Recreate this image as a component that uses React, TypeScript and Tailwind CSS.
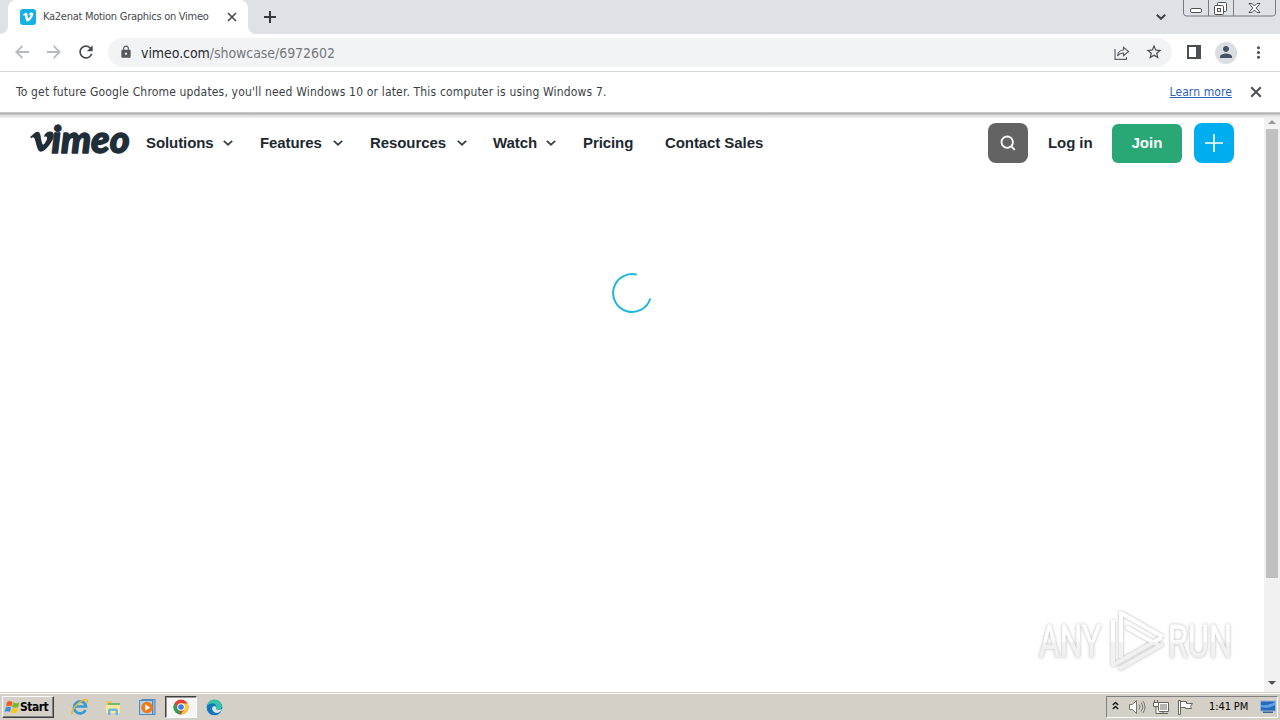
import React from "react";
import { FaVimeoV } from "react-icons/fa";
import { MdLock, MdRefresh, MdPerson, MdStarBorder, MdMoreVert } from "react-icons/md";

function Chevron({ className }: { className: string }) {
  return (
    <svg className={className} width="10" height="6" viewBox="0 0 10 6" fill="none" stroke="#39434a" strokeWidth="1.8">
      <path d="M.8.8 5 4.7 9.2.8" />
    </svg>
  );
}

function Cross({ size, color }: { size: number; color: string }) {
  return (
    <svg width={size} height={size} viewBox="0 0 10 10" stroke={color} strokeWidth="1.6">
      <path d="M1 1l8 8M9 1 1 9" />
    </svg>
  );
}

function TabStrip() {
  return (
    <header className="flex h-[34px] bg-[#dee1e6]">
      <svg className="mt-[26px] shrink-0" width="8" height="8"><path d="M8 0v8H0a8 8 0 0 0 8-8" fill="#fff" /></svg>
      <div className="flex h-[34px] w-[240px] items-center rounded-t-lg bg-white pl-3">
        <div className="flex size-4 items-center justify-center rounded-[3px] bg-[#14b1e7] text-white"><FaVimeoV size={12} /></div>
        <span className="ml-[7px] w-[184px] whitespace-nowrap pt-px font-['DejaVu_Sans_Condensed','DejaVu_Sans',sans-serif] text-[11px] tracking-[-0.27px] text-[#45494e] [font-stretch:condensed]">Ka2enat Motion Graphics on Vimeo</span>
        <Cross size={10} color="#45494e" />
      </div>
      <svg className="mt-[26px] shrink-0" width="8" height="8"><path d="M0 0v8h8a8 8 0 0 1-8-8" fill="#fff" /></svg>
      <svg className="ml-2 mt-[11px]" width="12" height="12" stroke="#34373c" strokeWidth="2"><path d="M6 0v12M0 6h12" /></svg>
      <svg className="ml-auto mt-[14px]" width="10" height="6" fill="none" stroke="#3c4043" strokeWidth="2"><path d="M.8.8 5 4.8 9.2.8" /></svg>
      <svg className="ml-[17px]" width="97" height="17" fill="none" stroke="#777a80">
        <path d="M.5 0v13q0 3 3 3h86q3 0 3-3V0M25.500 0v16M50.500 0v16" />
        <g stroke="#4e5258">
          <rect x="7.500" y="8.500" width="11" height="4" rx="1.500" fill="#fff" />
          <path d="M34.500 5V3.500q0-1 1-1h7q1 0 1 1v7q0 1-1 1H41" fill="#fff" />
          <rect x="31.500" y="5.500" width="9" height="9" rx="1" fill="#fff" />
          <rect x="34.500" y="8.500" width="3" height="3" />
          <path d="M66 3.500h3l2.500 2.500L74 3.500h3L73.200 8l3.800 4.500h-3L71.500 10 69 12.500h-3L69.800 8z" fill="#fff" />
        </g>
      </svg>
    </header>
  );
}

function Toolbar() {
  return (
    <div className="flex h-[38px] shrink-0 items-center border-b border-[#d4d6d9] bg-white">
      <svg className="mb-px ml-[15px]" width="14" height="14" fill="none" stroke="#b8babd" strokeWidth="1.8"><path d="M14 7H1.500M7.500.8 1.300 7l6.200 6.200" /></svg>
      <svg className="mb-px ml-[18px]" width="14" height="14" fill="none" stroke="#b8babd" strokeWidth="1.8"><path d="M0 7h12.500M6.500.8 12.700 7l-6.200 6.200" /></svg>
      <MdRefresh className="mb-px ml-[15px]" size={20} color="#484b4f" />
      <div className="ml-3 flex h-[29px] w-[1064px] items-center rounded-full bg-[#f1f3f4] pl-[11px]">
        <MdLock className="mb-px" size={14} color="#55585d" />
        <span className="ml-[8px] whitespace-nowrap pt-px font-['DejaVu_Sans_Condensed','DejaVu_Sans',sans-serif] text-[14px] tracking-[-0.06px] text-[#74787d] [font-stretch:condensed]"><span className="text-[#292c30]">vimeo.com</span>/showcase/6972602</span>
        <svg className="ml-auto mr-[15px]" width="16" height="16" fill="none" stroke="#5f6368" strokeWidth="1.200">
          <path d="M1 4v10.400h11.500V12M3.500 11q.8-6 6-6V2.300L14.500 6.500l-5 4.200V8q-4 0-6 3z" />
        </svg>
        <MdStarBorder className="mb-px mr-[9px]" size={18} color="#484c51" />
      </div>
      <svg className="mb-px ml-[15px]" width="14" height="14"><path fill="#4b4e53" fillRule="evenodd" d="M0 0h14v14H0zM2 2v10h7V2z" /></svg>
      <div className="ml-[14px] flex size-[22px] items-center justify-center rounded-full bg-[#dadde2]"><MdPerson className="mb-px" size={18} color="#445064" /></div>
      <MdMoreVert className="ml-3" size={19} color="#4f5358" />
    </div>
  );
}

function UpdateBar() {
  return (
    <div className="flex h-10 shrink-0 items-center bg-white pl-4 font-['DejaVu_Sans_Condensed','DejaVu_Sans',sans-serif] text-[12px] text-[#3b3f44] [font-stretch:condensed]">
      <span className="whitespace-nowrap tracking-[0.165px]">To get future Google Chrome updates, you'll need Windows 10 or later. This computer is using Windows 7.</span>
      <span className="ml-auto mr-[18px] whitespace-nowrap tracking-[0.1px] text-[#2c62ba] underline">Learn more</span>
      <div className="mr-[18px]"><Cross size={12} color="#4a4d52" /></div>
    </div>
  );
}

function VimeoPage() {
  return (
    <main className="flex min-h-0 grow flex-col bg-white">
      <nav className="flex h-[50px] items-center font-['Liberation_Sans',sans-serif] text-[15px] font-bold tracking-[-0.08px] text-[#1d292f]">
        <svg className="ml-[29px] w-[103px] shrink-0 overflow-visible" height="40">
          <FaVimeoV x="-0.5" y="5" size={27} color="#1f2e38" />
          <text x="22.500" y="29.500" textLength="78" lengthAdjust="spacingAndGlyphs" fontFamily="Lato" fontStyle="italic" fontWeight="900" fontSize="38" fill="#1f2e38" stroke="#1f2e38" strokeWidth="1.400" strokeLinejoin="round">imeo</text>
        </svg>
        <span className="ml-[14px] w-[77px] whitespace-nowrap">Solutions</span><Chevron className="mr-[27px]" />
        <span className="w-[73px] whitespace-nowrap">Features</span><Chevron className="mr-[27px]" />
        <span className="w-[87px] whitespace-nowrap">Resources</span><Chevron className="mr-[26px]" />
        <span className="w-[53px] whitespace-nowrap">Watch</span><Chevron className="mr-[27px]" />
        <span className="w-[82px] whitespace-nowrap">Pricing</span>
        <span className="whitespace-nowrap">Contact Sales</span>
        <button className="ml-auto flex size-10 items-center justify-center rounded-lg bg-[#636363]">
          <svg width="16" height="16" fill="none" stroke="#fff" strokeWidth="1.800"><circle cx="7.200" cy="7.200" r="5.700" /><path d="m11.300 11.300 3.500 3.500" /></svg>
        </button>
        <span className="ml-5 w-16 whitespace-nowrap">Log in</span>
        <button className="mt-px flex h-[39px] w-[70px] items-center justify-center rounded-md bg-[#29a775] pb-px tracking-[0.1px] text-white">Join</button>
        <button className="ml-3 mr-[30px] flex size-10 items-center justify-center rounded-lg bg-[#00adef]">
          <svg width="18" height="18" stroke="#fff" strokeWidth="1.600"><path d="M9 0v18M0 9h18" /></svg>
        </button>
      </nav>
      <svg className="ml-[611px] mt-[104px] shrink-0" width="42" height="42" fill="none" stroke="#20b7dc" strokeWidth="2"><path d="M25.900 2.600A19 19 0 1 0 39.300 26.500" /></svg>
      <svg className="ml-auto mr-[26px] mt-auto mb-[20px] shrink-0 overflow-visible [filter:drop-shadow(0_0_1.500px_#b4b4b4)]" width="204" height="66">
        <defs><linearGradient id="fade" gradientUnits="userSpaceOnUse" x1="0" y1="6" x2="0" y2="66"><stop offset="0.480" stopColor="#fff" /><stop offset="0.520" stopColor="#f1f1f1" /></linearGradient></defs>
        <g fill="url(#fade)" stroke="url(#fade)" strokeWidth=".8" fontFamily="Roboto" fontSize="45">
          <text x="5" y="51" textLength="62" lengthAdjust="spacingAndGlyphs">ANY</text>
          <text x="134" y="51" textLength="64" lengthAdjust="spacingAndGlyphs">RUN</text>
        </g>
        <g fill="none" stroke="url(#fade)" strokeWidth="4" strokeLinejoin="round">
          <path d="M87 52V7l42 24M79 14v45l48-27" />
          <path d="M92 21l34 19M85 63l44-25" />
        </g>
      </svg>
    </main>
  );
}

function ScrollBar() {
  return (
    <div className="flex w-4 flex-col items-center bg-[#f1f1f1]">
      <svg className="mt-[2px] shrink-0" width="8" height="4" fill="#999"><path d="M0 4 4 0l4 4z" /></svg>
      <div className="mt-[5px] h-[449px] w-3 shrink-0 bg-[#c0c0c0]" />
      <svg className="mb-[7px] mt-auto shrink-0" width="8" height="4" fill="#505050"><path d="M0 0h8L4 4z" /></svg>
    </div>
  );
}

function Taskbar() {
  return (
    <footer className="flex h-7 shrink-0 items-center border-t border-[#d4d0c8] bg-[#d4d0c8] pt-px font-['DejaVu_Sans_Condensed','DejaVu_Sans',sans-serif] text-[11px] shadow-[inset_0_1px_#fff] [font-stretch:condensed]">
      <button className="ml-[2px] flex h-[22px] w-[52px] items-center border border-b-[#404040] border-l-white border-r-[#404040] border-t-white pl-px shadow-[inset_-1px_-1px_#808080]">
        <svg className="shrink-0" width="17" height="16">
          <path d="M3 3q3-2 5.500 0L7.400 7.500Q5 6 2 7.500z" fill="#f05b26" /><path d="M9.300 3.500q3 1.600 6 0L14.200 8q-3 1.500-6 0z" fill="#79b72a" />
          <path d="M1.800 8.500q3-1.500 5.300 0L6 13q-3-1.600-5.500 0z" fill="#3a91db" /><path d="M8 9q3 1.500 6 0l-1.200 4.500q-3 1.500-6 0z" fill="#fbc51e" />
        </svg>
        <span className="-ml-px text-[12px] font-bold tracking-[-0.5px]">Start</span>
      </button>
      <svg className="ml-[17px]" width="18" height="18" fill="none">
        <path d="M14.500 12A6 6 0 1 1 15 8.500H4.500" stroke="#379bd4" strokeWidth="2.700" /><path d="M2 15Q-.5 17 1.500 12.500C4 7 13 0 16 2q1.300 1-.8 3.500" stroke="#e5b934" strokeWidth="1.500" />
      </svg>
      <svg className="ml-[16px]" width="17" height="17">
        <path d="M1 2h5l2 2h7v10H1z" fill="#e9c85b" /><path d="M3 4h12v3H3z" fill="#71ba76" /><path d="M1 6h14v8H1z" fill="#fae8a0" /><path d="M3 16v-5q0-1.500 1.500-1.500h7q1.500 0 1.500 1.500v5h-2.500v-4h-5v4z" fill="#72b8dc" />
      </svg>
      <svg className="ml-[17px]" width="17" height="17">
        <rect x="3" y=".5" width="13" height="15" fill="#8db6df" stroke="#5888bb" /><rect x=".5" y="1.500" width="13" height="14" fill="#b1d3ee" stroke="#518abd" /><circle cx="8" cy="8.500" r="5.800" fill="#f27a13" /><path d="M6.200 5.200v6.600l5-3.300z" fill="#fff" />
      </svg>
      <div className="ml-[9px] flex h-[22px] w-[32px] items-center justify-center border border-b-white border-l-[#404040] border-r-white border-t-[#404040] bg-[#f6f5f3] shadow-[inset_1px_1px_#999]">
        <svg width="16" height="16" viewBox="0 0 16 16">
          <circle cx="8" cy="8" r="7.500" fill="#de4436" /><path d="M1.500 4.250 4.600 9.800 8 15.500A7.500 7.500 0 0 1 1.500 4.250" fill="#22a45d" /><path d="M8 4.500h6.600A7.500 7.500 0 0 1 8 15.500l3.200-5.600z" fill="#fbcc31" /><circle cx="8" cy="8" r="3.800" fill="#fff" /><circle cx="8" cy="8" r="2.800" fill="#397ee8" />
        </svg>
      </div>
      <svg className="ml-[9px]" width="17" height="17">
        <circle cx="8.500" cy="8.500" r="7.800" fill="#1377bd" /><path d="M1 7Q3-.5 10 .8c6 1 8 8.500 3 10-2 .5-4-.5-3-2Q11 5 7 4.500 3 4.300 1 7" fill="#35c3a4" /><path d="M10 8.500q-.7 2.500 3 2.500l3-1q-1.500 4-6 4Q5 13 6 7q3-1.500 4 1.500" fill="#d8e6e8" /><path d="M1 7q5-5 8 0-3 0-3 3 1 4 6 5Q5 18 1.500 12z" fill="#1377bd" />
      </svg>
      <div className="ml-auto mr-[2px] flex h-[22px] w-[172px] items-center border border-b-white border-l-[#808080] border-r-white border-t-[#808080]">
        <svg className="mb-[3px] ml-[5px]" width="7" height="9" fill="none" stroke="#111" strokeWidth="1.400"><path d="m.8 4 2.700-2.500L6.200 4M.8 8l2.700-2.500L6.200 8" /></svg>
        <svg className="ml-[10px]" width="17" height="16" fill="none" stroke="#77756f">
          <path d="M.5 5.500h3l4-4v13l-4-4h-3z" fill="#fff" /><path d="M10 5.500q2 2.500 0 5M12 3.500q3.500 4.500 0 9M14 2q4 6 0 12" />
        </svg>
        <svg className="ml-[7px]" width="17" height="16" fill="#fff" stroke="#66645f">
          <path d="M5.500 3.500h10v9h-10zM7 14.500h8M10 12.500v2" /><rect x="7" y="5" width="7" height="6" fill="#b7b5af" stroke="none" /><path d="M.5 3.500h5v4h-5zM1.500 1v2.500M4.500 1v2.500M3 7.500v7h4" />
        </svg>
        <svg className="ml-[7px]" width="17" height="16" fill="#fff" stroke="#66645f"><path d="M1.500 1.500h2v14h-2zM3.500 2.500h6v2h6l-2 3 1 2H8.500v-1h-5z" /></svg>
        <span className="ml-[15px] w-[51px] whitespace-nowrap tracking-[-0.1px]">1:41 PM</span>
        <svg width="17" height="14"><rect x=".5" y="1" width="15" height="10" fill="#2469be" stroke="#9db8d6" /><path d="M1 5q7 1 14-3v3Q8 9 1 7z" fill="#5fa5e4" /><path d="M3 11.500h10v1.500H3z" fill="#356898" /></svg>
      </div>
    </footer>
  );
}

export default function App() {
  return (
    <div className="flex h-[720px] w-[1280px] flex-col overflow-hidden bg-white">
      <TabStrip />
      <Toolbar />
      <UpdateBar />
      <div className="h-[6px] shrink-0 border-t border-[#c8c8c8] bg-gradient-to-b from-[#a9aaaa] via-[#dddddd] to-[#f4f4f4]" />
      <div className="flex min-h-0 grow"><VimeoPage /><ScrollBar /></div>
      <Taskbar />
    </div>
  );
}
